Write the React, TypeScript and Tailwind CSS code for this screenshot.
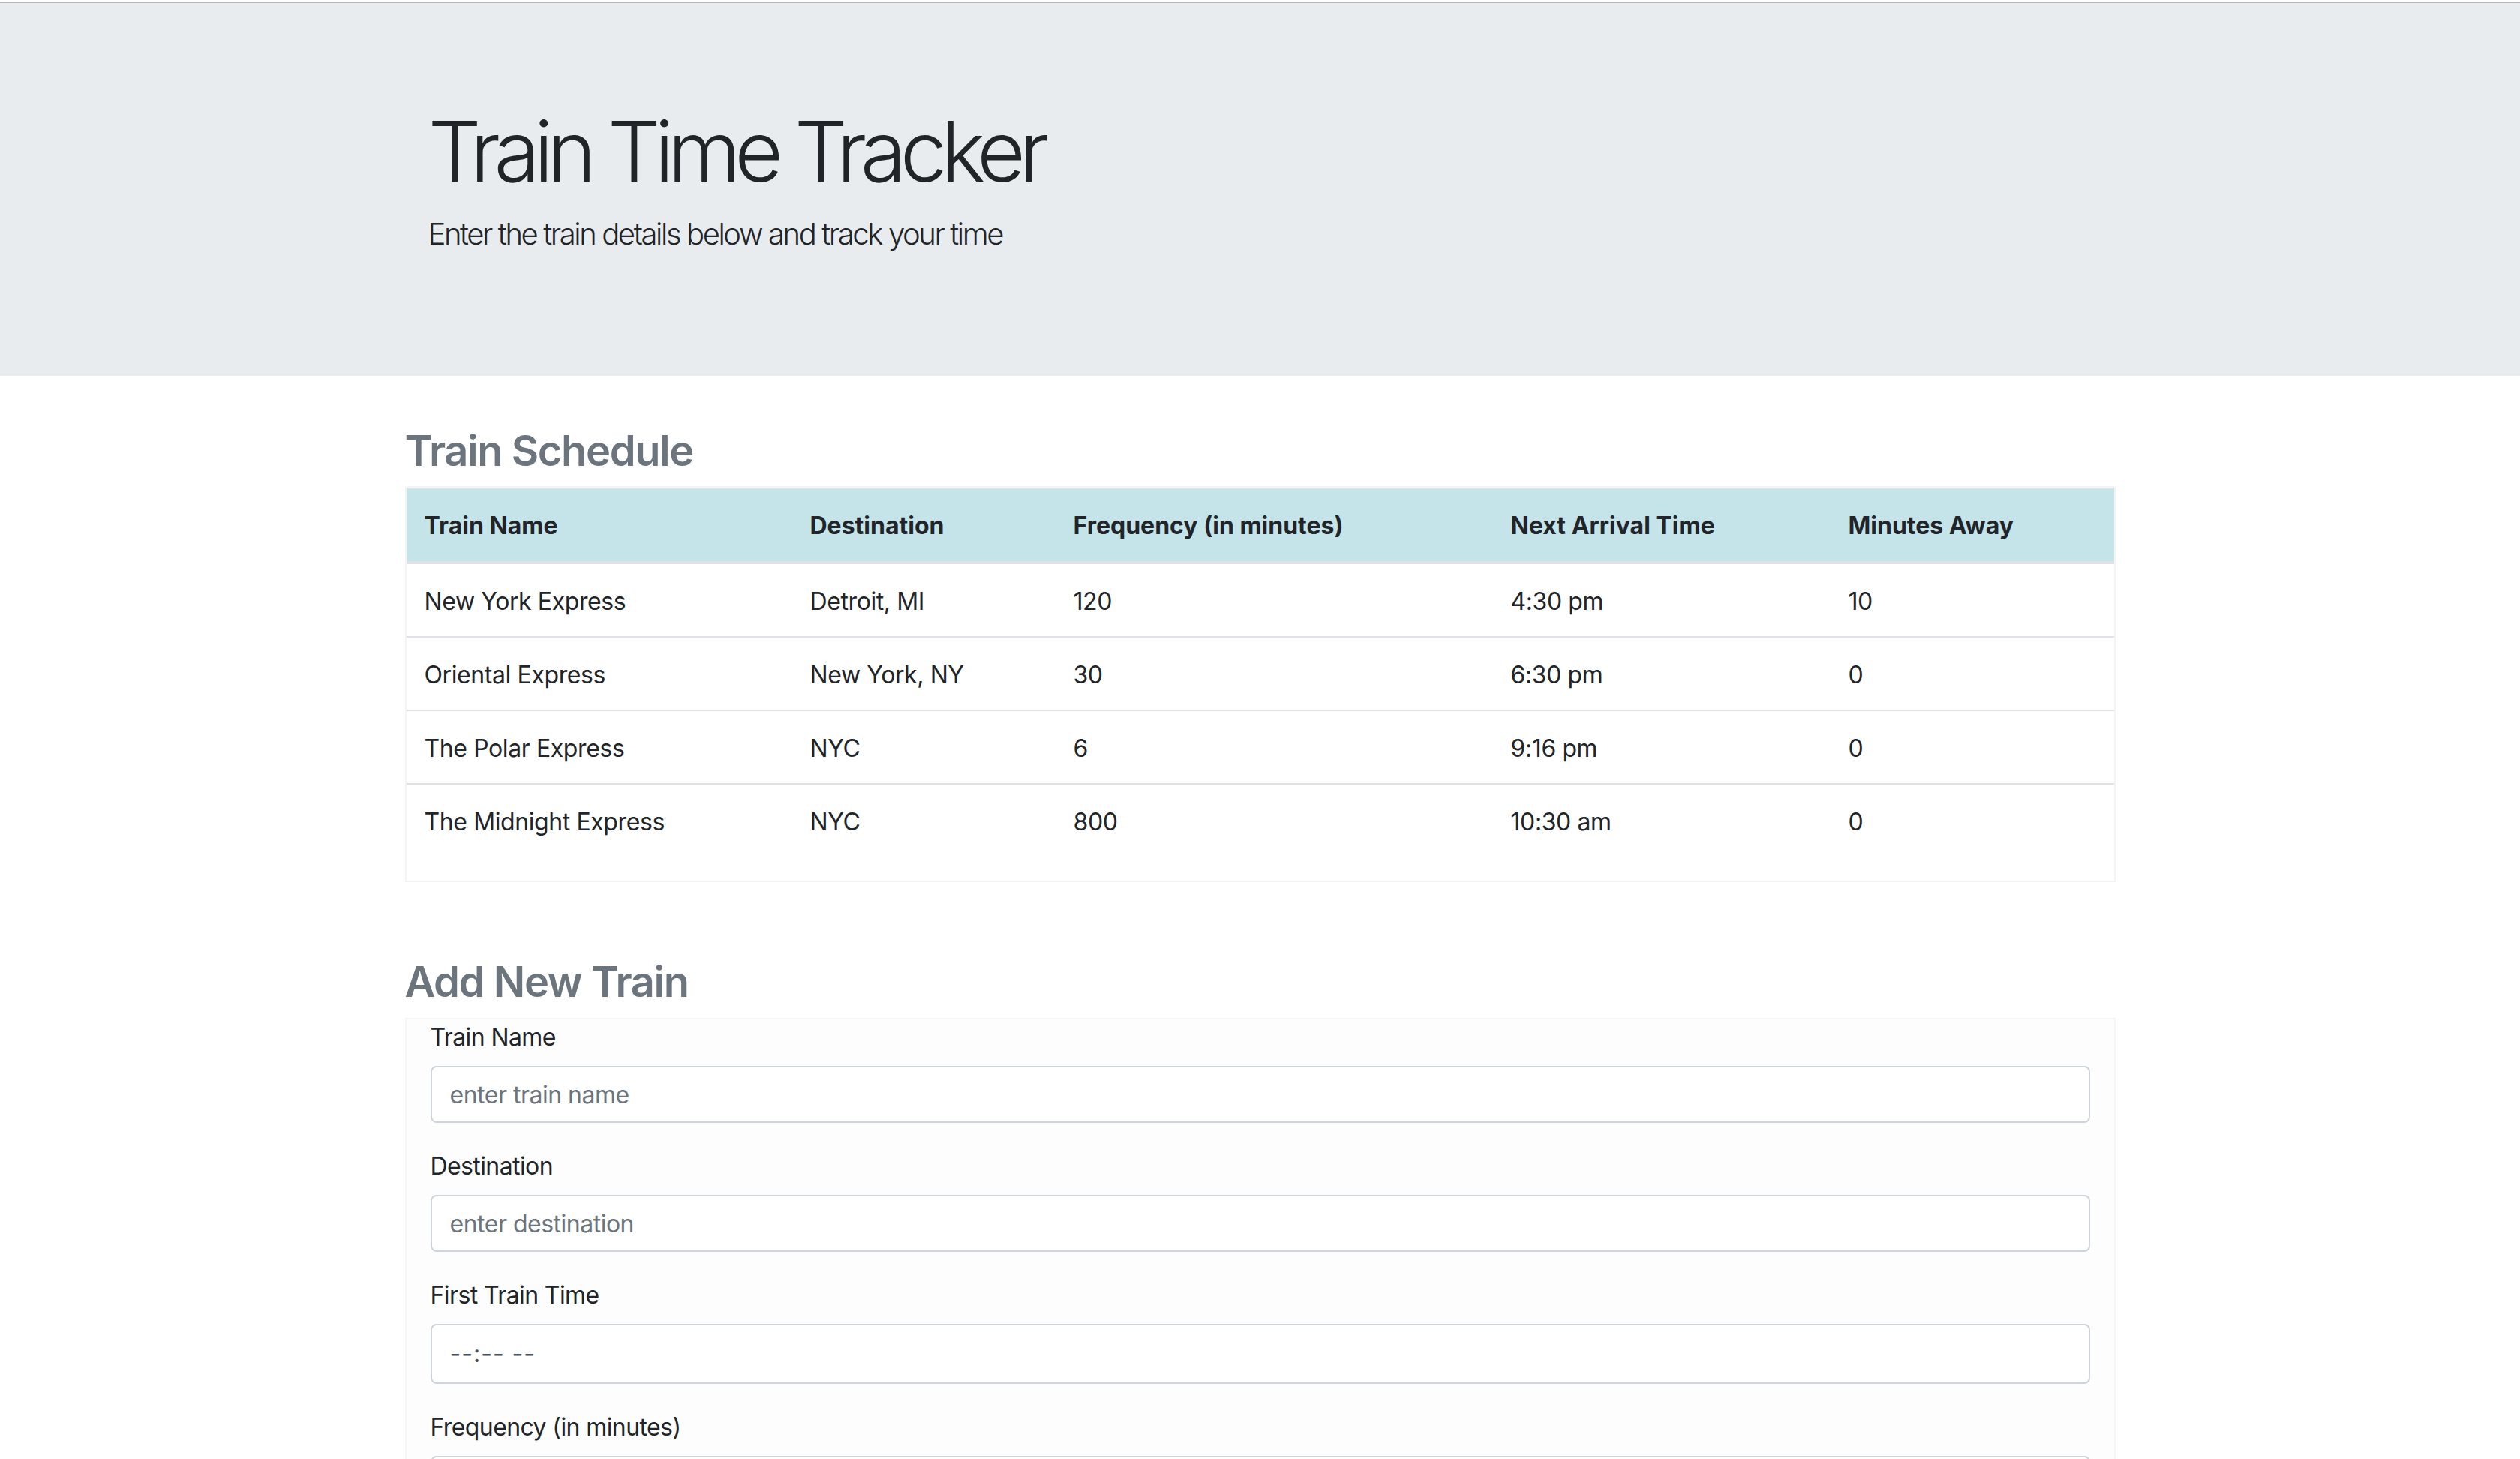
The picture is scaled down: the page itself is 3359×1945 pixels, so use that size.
import React from 'react';

type Train = {
  name: string;
  destination: string;
  frequency: string;
  nextArrival: string;
  minutesAway: string;
};

const TRAINS: Train[] = [
  { name: 'New York Express', destination: 'Detroit, MI', frequency: '120', nextArrival: '4:30 pm', minutesAway: '10' },
  { name: 'Oriental Express', destination: 'New York, NY', frequency: '30', nextArrival: '6:30 pm', minutesAway: '0' },
  { name: 'The Polar Express', destination: 'NYC', frequency: '6', nextArrival: '9:16 pm', minutesAway: '0' },
  { name: 'The Midnight Express', destination: 'NYC', frequency: '800', nextArrival: '10:30 am', minutesAway: '0' },
];

const HEADERS = ['Train Name', 'Destination', 'Frequency (in minutes)', 'Next Arrival Time', 'Minutes Away'];

function Field({ label, placeholder, time }: { label: string; placeholder?: string; time?: boolean }) {
  return (
    <div className="mb-[34px]">
      <label className="block mb-[14px] text-[32px] leading-[48px] tracking-[-0.6px] text-[#212529]">{label}</label>
      {time ? (
        <div className="flex items-center h-[80px] px-[24px] border-2 border-[#ced4da] rounded-[8px] bg-white text-[32px] text-[#495057] tracking-[1px]">
          --:-- --
        </div>
      ) : (
        <input
          type="text"
          placeholder={placeholder}
          className="block w-full h-[76px] px-[24px] border-2 border-[#ced4da] rounded-[8px] bg-white text-[32px] tracking-[-0.5px] text-[#495057] placeholder:text-[#6c757d] outline-none"
        />
      )}
    </div>
  );
}

export default function App() {
  return (
    <div className="min-h-screen bg-white font-['Inter',sans-serif] text-[#212529] pt-[2px]">
      {/* Jumbotron */}
      <header className="bg-[#e9ecef] border-t-2 border-[#b8b8b8] pt-[130px] pb-[157px]">
        <div className="w-[2280px] mx-auto px-[31px]">
          <h1 className="text-[112px] leading-[134px] font-light tracking-[-8.5px] mb-[14px]">Train Time Tracker</h1>
          <p className="text-[40px] leading-[60px] font-light tracking-[-2.4px] mb-[2px]">
            Enter the train details below and track your time
          </p>
        </div>
      </header>

      <main className="w-[2280px] mx-auto">
        {/* Schedule */}
        <h3 className="mt-[67px] mb-[13px] text-[56px] leading-[67px] font-semibold text-[#6c757d] tracking-[-1.4px]">
          Train Schedule
        </h3>
        <div className="border-2 border-[#f4f4f4]">
          <table className="w-full table-fixed border-collapse mb-[32px] text-[32px] leading-[48px]">
            <colgroup>
              <col className="w-[514px]" />
              <col className="w-[351px]" />
              <col className="w-[583px]" />
              <col className="w-[450px]" />
              <col />
            </colgroup>
            <thead>
              <tr className="bg-[#c4e4e9]">
                {HEADERS.map((h) => (
                  <th
                    key={h}
                    className="text-left font-bold px-[24px] pt-[25px] pb-[23px] border-t-2 border-b-4 border-[#dee2e6]"
                  >
                    {h}
                  </th>
                ))}
              </tr>
            </thead>
            <tbody className="tracking-[-0.4px]">
              {TRAINS.map((t, i) => (
                <tr key={t.name} className={i > 0 ? 'border-t-2 border-[#dee2e6]' : ''}>
                  <td className="px-[24px] pt-[26px] pb-[22px]">{t.name}</td>
                  <td className="px-[24px] pt-[26px] pb-[22px]">{t.destination}</td>
                  <td className="px-[24px] pt-[26px] pb-[22px]">{t.frequency}</td>
                  <td className="px-[24px] pt-[26px] pb-[22px]">{t.nextArrival}</td>
                  <td className="px-[24px] pt-[26px] pb-[22px]">{t.minutesAway}</td>
                </tr>
              ))}
            </tbody>
          </table>
        </div>

        {/* Add train form */}
        <h3 className="mt-[100px] mb-[14px] text-[56px] leading-[67px] font-semibold text-[#6c757d] tracking-[-1.4px]">
          Add New Train
        </h3>
        <form className="border-2 border-[#f6f6f6] bg-[#fdfdfd] px-[32px] pt-0 pb-[32px]" onSubmit={(e) => e.preventDefault()}>
          <Field label="Train Name" placeholder="enter train name" />
          <Field label="Destination" placeholder="enter destination" />
          <Field label="First Train Time" time />
          <Field label="Frequency (in minutes)" placeholder="enter frequency" />
          <button
            type="submit"
            className="px-[24px] h-[76px] rounded-[8px] bg-[#007bff] text-white text-[32px]"
          >
            Submit
          </button>
        </form>
      </main>
    </div>
  );
}
